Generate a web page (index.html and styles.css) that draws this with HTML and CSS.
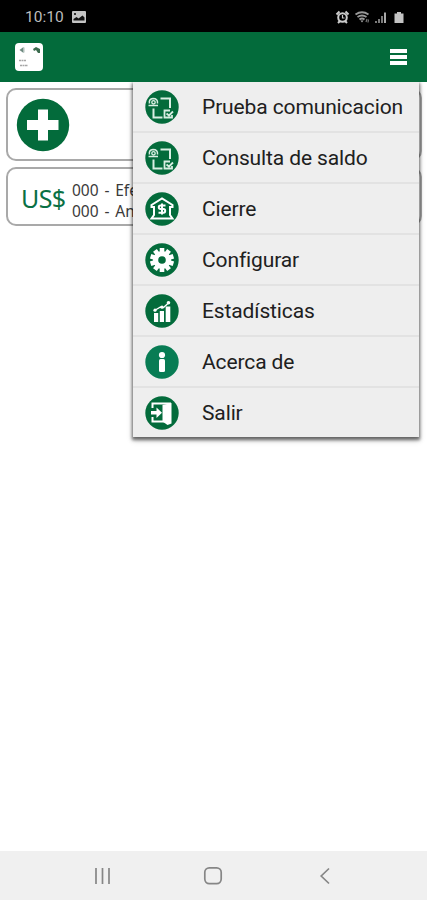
FILE: index.html
```html
<!DOCTYPE html>
<html lang="es">
<head>
<meta charset="utf-8">
<title>Menú</title>
<link rel="stylesheet" href="styles.css">
</head>
<body>
<div class="status">
  <span class="clock">10:10</span>
  <svg class="picture" width="14" height="12" viewBox="0 0 14 12"><rect width="14" height="12" rx="1" fill="#c4c4c4"/><path d="M1.500 9.500V8l3-2 2 1.500 4-3 2 2v3z" fill="#111"/><path d="M2 2h2v2H2z" fill="#333"/></svg>
  <svg class="signals" width="70" height="15" viewBox="0 0 70 15">
    <circle cx="7.500" cy="7.500" r="4.300" fill="none" stroke="#ccc" stroke-width="2"/>
    <path d="M1.500 4.500l3-3M13.500 4.500l-3-3M3 13l2-2M12 13l-2-2" stroke="#ccc" stroke-width="2"/>
    <path d="M7.500 5v3h2" fill="none" stroke="#ccc" stroke-width="1.200"/>
    <path d="M20.500 4.500q6.500-4.500 13 0M22.500 7q4.500-3 9 0M24.500 9.500q2.500-2 5 0" fill="none" stroke="#999" stroke-width="1.800"/>
    <path d="M25.500 10.500h3L27 12.500z" fill="#aaa"/>
    <path d="M31 12l1-3M33.500 9.500l-.5 3" stroke="#777" stroke-width="1.200"/>
    <path d="M41 13v-2M44 13V9M47 13V6" stroke="#888" stroke-width="1.800"/><path d="M50 13V2.500" stroke="#bbb" stroke-width="1.800"/>
    <path d="M59.500 3.500h2.500V2h4v1.500h2.500V13h-9z" fill="#c4c4c4"/>
  </svg>
</div>
<header class="bar">
  <svg width="28" height="28" viewBox="0 0 28 28"><rect width="28" height="28" rx="4" fill="#fff"/><path d="M4.500 7l4-3v6z" fill="#6e8a80"/><path d="M9 4.500v5" stroke="#b0c0ba"/><path d="M18 6l3-2 4 2v4h-2L21 7l-2 1z" fill="#3b6b4e"/><path d="M4 17.500h7M5 22.500h8" stroke="#a6a6a6" stroke-width="1.500" stroke-dasharray="2 .5"/></svg>
  <div class="burger"><i></i><i></i><i></i></div>
</header>
<main>
  <section class="card add">
    <svg width="54" height="54" viewBox="0 0 54 54"><circle cx="27" cy="27" r="26.200" fill="#036b3b"/><path d="M22 11.500h10V22h10.500v10H32v10.500H22V32H11V22h11z" fill="#fff"/></svg>
  </section>
  <section class="card totals">
    <span class="currency">US$</span>
    <div class="lines"><p>000 - Efectivo</p><p>000 - Anulado</p></div>
  </section>
</main>
<nav class="menu">
  <div class="item"><svg class="icon" viewBox="0 0 34 34"><use href="#link"/></svg><span>Prueba comunicacion</span></div>
  <div class="item"><svg class="icon" viewBox="0 0 34 34">
    <g id="link"><circle cx="17" cy="17" r="16.700" fill="#036b3b"/><g fill="none" stroke="#d8eee2" stroke-width="2"><path d="M15.500 8.500H25V18M8.500 18.500v9h9"/><path d="M3.500 15.500h9.500M4.500 13.500Q3.500 9 8 8.500q5 0 4.500 5" stroke-width="1.500"/><circle cx="8.500" cy="12.300" r="1.700" stroke-width="1.400"/><path d="M25 20.500h-5.500v7H27V25M21.500 23.500l2.500 2 4-4" stroke-width="1.800"/></g></g>
  </svg><span>Consulta de saldo</span></div>
  <div class="item"><svg class="icon" viewBox="0 0 34 34"><circle cx="17" cy="17" r="16.700" fill="#036b3b"/><path d="M6.500 13L17 6.500 27.500 13v2H25v8l2.500 3.500h-21L9 23v-8H6.500z" fill="none" stroke="#fff" stroke-width="2"/><path d="M20.500 13.500h-5q-1.700 0-1.700 1.700t1.700 1.700h3q1.700 0 1.700 1.900t-1.700 1.900h-5M17 11.500v11" fill="none" stroke="#fff" stroke-width="2"/></svg><span>Cierre</span></div>
  <div class="item"><svg class="icon" viewBox="0 0 34 34"><circle cx="17" cy="17" r="16.700" fill="#036b3b"/><circle cx="17" cy="17" r="9" fill="#fff"/><g stroke="#fff" stroke-width="4.600" stroke-linecap="butt"><path id="cog" d="M17 5v24"/><use href="#cog" transform="rotate(36 17 17)"/><use href="#cog" transform="rotate(72 17 17)"/><use href="#cog" transform="rotate(108 17 17)"/><use href="#cog" transform="rotate(144 17 17)"/></g><circle cx="17" cy="17" r="3.800" fill="#036b3b"/></svg><span>Configurar</span></div>
  <div class="item"><svg class="icon" viewBox="0 0 34 34"><circle cx="17" cy="17" r="16.700" fill="#036b3b"/><path d="M9 19h4.200v9H9zM14.800 17h4.200v11h-4.200zM20.700 12.500h4.600V28h-4.600z" fill="#fff"/><path d="M9.500 16.500l6-3.500 3 .5 5.500-5" fill="none" stroke="#fff" stroke-width="1.300"/><g fill="#fff"><circle cx="10" cy="16.200" r="1.600"/><circle cx="17" cy="13.200" r="1.600"/><circle cx="23.500" cy="8.800" r="1.800"/></g></svg><span>Estadísticas</span></div>
  <div class="item"><svg class="icon" viewBox="0 0 34 34"><circle cx="17" cy="17" r="16.700" fill="#087c54"/><circle cx="17" cy="10" r="3.100" fill="#fff"/><rect x="14" y="14" width="6" height="13" rx="1.500" fill="#fff"/></svg><span>Acerca de</span></div>
  <div class="item"><svg class="icon" viewBox="0 0 34 34"><circle cx="17" cy="17" r="16.700" fill="#036b3b"/><path d="M7.500 12V7.500H25v18H7.500V21" fill="none" stroke="#fff" stroke-width="2"/><path d="M17.500 9L26.500 7v20.500l-4 1.500-5-3.500z" fill="#fff"/><path d="M6 15h5.500v-3.500L17 16.700 11.500 22v-3.500H6z" fill="#fff"/></svg><span>Salir</span></div>
</nav>
<footer class="navbar">
  <svg width="18" height="18" viewBox="0 0 18 18"><path d="M2 1v16M8.500 1v16M15 1v16" stroke="#868686" stroke-width="1.700"/></svg>
  <svg width="20" height="20" viewBox="0 0 20 20"><rect x="1.800" y="1.800" width="16.400" height="15.800" rx="4.500" fill="none" stroke="#868686" stroke-width="1.700"/></svg>
  <svg width="12" height="18" viewBox="0 0 12 18"><path d="M10 1.500L2.200 9l7.800 7.500" fill="none" stroke="#868686" stroke-width="1.700"/></svg>
</footer>
</body>
</html>
```
FILE: styles.css
```css
* { box-sizing: border-box; }
body {
  margin: 0;
  height: 900px;
  display: flex;
  flex-direction: column;
  position: relative;
  overflow: hidden;
  background: #fff;
  font-family: Roboto, sans-serif;
}
p { margin: 0; }
.status {
  height: 32px;
  flex: none;
  background: #000;
  display: flex;
  align-items: center;
  padding: 2px 22px 0 25px;
}
.clock { color: #bdbdbd; font-size: 15.500px; width: 39px; }
.picture { margin-left: 8px; }
.signals { margin-left: auto; }
.bar {
  height: 50px;
  flex: none;
  background: #036b3b;
  display: flex;
  align-items: center;
  justify-content: space-between;
  padding: 0 20px 0 15px;
}
.burger { width: 17px; display: grid; gap: 2px; }
.burger i { height: 4px; background: #fff; }
main { flex: 1; padding: 6px 5px 0 6px; }
.card {
  border: 2px solid #a9a9a9;
  border-radius: 10px;
  display: flex;
  align-items: center;
}
.add { height: 73px; padding-left: 8px; }
.totals { height: 59px; margin-top: 6px; padding: 8px 0 0 13px; }
.currency { color: #0a7044; font: 25px/30px "Noto Sans", sans-serif; width: 51px; letter-spacing: -.6px; white-space: nowrap; margin-top: -5px; }
.lines { font: 15.500px/21px "Noto Sans", sans-serif; word-spacing: 1.800px; color: #3a3a3a; white-space: nowrap; }
.menu {
  position: absolute;
  left: 133px;
  top: 82px;
  width: 286px;
  height: 355px;
  background: #eee;
  box-shadow: 0 2px 3px 1px rgba(0,0,0,.5), 0 3px 6px rgba(0,0,0,.25);
  clip-path: inset(0 -12px -16px -12px);
}
.item {
  height: 51px;
  display: flex;
  align-items: center;
  gap: 23px;
  padding: 1px 0 0 12px;
  border-bottom: 2px solid #e2e2e2;
  font-size: 21px;
  letter-spacing: -.12px;
  color: #202020;
  white-space: nowrap;
}
.item:last-child { height: 49px; border: 0; }
.icon { width: 34px; height: 34px; flex: none; }
.navbar {
  height: 49px;
  flex: none;
  background: #f0f0f0;
  display: flex;
  align-items: center;
  justify-content: space-between;
  padding: 0 96px 0 94px;
}
.navbar svg:nth-child(2) { margin-right: 5px; }
```
